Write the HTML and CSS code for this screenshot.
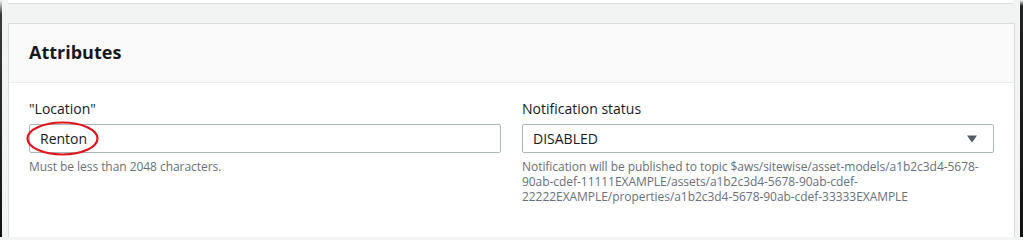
FILE: index.html
```html
<!DOCTYPE html>
<html>
<head>
<meta charset="utf-8">
<link rel="stylesheet" href="styles.css">
</head>
<body>
<div class="frame">
  <div class="edge edge-left"></div>
  <div class="main">
    <div class="prev-card"></div>
    <section class="card">
      <header class="card-header"><h2>Attributes</h2></header>
      <div class="card-body">
        <div class="field">
          <label class="label">"Location"</label>
          <div class="input-wrap">
            <div class="input">Renton</div>
            <svg class="ellipse" width="74" height="36" viewBox="0 0 74 36"><ellipse cx="36.5" cy="17.5" rx="35" ry="16" fill="none" stroke="#e0141e" stroke-width="2.2"/></svg>
          </div>
          <div class="hint">Must be less than 2048 characters.</div>
        </div>
        <div class="field">
          <label class="label">Notification status</label>
          <div class="select">
            <span>DISABLED</span>
            <svg class="caret" width="10" height="8" viewBox="0 0 10 8"><path d="M0 0.5 L10 0.5 L5 7.5 Z" fill="#545b64"/></svg>
          </div>
          <div class="hint">Notification will be published to topic $aws/sitewise/asset-models/a1b2c3d4-5678-90ab-cdef-11111EXAMPLE/assets/a1b2c3d4-5678-90ab-cdef-22222EXAMPLE/properties/a1b2c3d4-5678-90ab-cdef-33333EXAMPLE</div>
        </div>
      </div>
    </section>
  </div>
  <div class="edge edge-right"></div>
</div>
</body>
</html>
```
FILE: styles.css
```css
html, body {
  margin: 0;
  padding: 0;
  height: 100%;
  background: #f2f3f3;
  font-family: "Open Sans", "Noto Sans", Arial, sans-serif;
  color: #16191f;
}
.frame {
  display: flex;
  height: 237px;
  overflow: hidden;
}
.edge {
  flex: none;
}
.edge-left {
  width: 2px;
  background: linear-gradient(to bottom, #f2f3f3 0, #3a3a3a 14px, #111 100%);
}
.edge-right {
  width: 3px;
  background: linear-gradient(to bottom, #f2f3f3 0, #222 6px, #111 100%);
}
.main {
  flex: 1;
  padding: 0 5px 0 6px;
  display: flex;
  flex-direction: column;
}
.prev-card {
  height: 3px;
  background: #fff;
  border-bottom: 1px solid #dadede;
  margin-right: 2px;
  flex: none;
}
.card {
  margin-top: 19px;
  background: #fff;
  border: 1px solid #d9dddd;
  border-bottom: none;
  flex: 1;
}
.card-header {
  height: 58px;
  background: #fafafa;
  border-bottom: 1px solid #eaeded;
  display: flex;
  align-items: center;
  padding: 0 20px;
}
.card-header h2 {
  margin: 0;
  font-size: 18px;
  font-weight: 700;
  line-height: 22px;
  padding-bottom: 3px;
}
.card-body {
  display: grid;
  grid-template-columns: 1fr 1fr;
  column-gap: 21px;
  padding: 15px 20px 0 20px;
}
.field {
  display: flex;
  flex-direction: column;
}
.label {
  font-size: 14px;
  line-height: 22px;
  margin-bottom: 4px;
}
.input-wrap {
  position: relative;
}
.input, .select {
  height: 27px;
  border: 1px solid #aab7b8;
  border-radius: 2px;
  font-size: 14px;
  line-height: 27px;
  padding: 0 10px;
  background: #fff;
}
.input {
  padding-left: 10px;
}
.ellipse {
  position: absolute;
  left: -3px;
  top: -3px;
}
.select {
  display: flex;
  align-items: center;
  justify-content: space-between;
  padding-right: 16px;
}
.hint {
  margin-top: 6px;
  font-size: 12px;
  line-height: 15px;
  color: #687078;
  letter-spacing: -0.05px;
}
```
